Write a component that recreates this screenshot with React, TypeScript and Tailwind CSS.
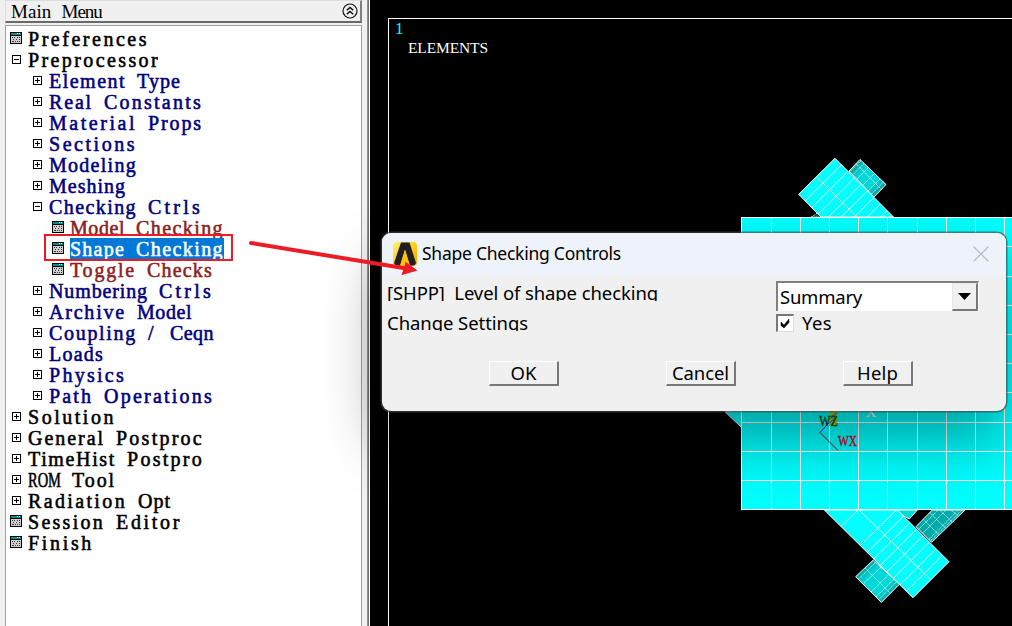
import React from "react";

const SERIF = '"Liberation Serif", serif';
const SANS = '"Noto Sans", "Open Sans", sans-serif';

let ctx: CanvasRenderingContext2D | null = null;
function measure(text: string, font: string) {
  if (!ctx) ctx = document.createElement("canvas").getContext("2d");
  if (!ctx) return 0;
  ctx.font = font;
  return ctx.measureText(text).width;
}

/* Text spread evenly over a fixed width; text that is much too wide is condensed instead. */
function Fit({ text, width, size, family }: { text: string; width: number; size: number; family: string }) {
  const natural = measure(text, `${size}px ${family}`);
  const spacing = (width - natural) / text.length;
  const condense = spacing < -1;
  return (
    <span
      className="inline-block shrink-0 origin-left whitespace-pre"
      style={{
        width,
        fontSize: size,
        fontFamily: family,
        letterSpacing: condense ? 0 : `${spacing}px`,
        transform: condense ? `scaleX(${width / natural})` : undefined,
      }}
    >
      {text}
    </span>
  );
}

/* Words laid on a fixed character pitch. */
function Pitched({ text, pitch, size }: { text: string; pitch: number; size: number }) {
  return (
    <span className="flex" style={{ gap: pitch }}>
      {text.split(" ").map((word, i) => (
        <Fit key={i} text={word} width={word.length * pitch} size={size} family={SERIF} />
      ))}
    </span>
  );
}

type Kind = "form" | "plus" | "minus";
type Item = { level: 0 | 1 | 2; kind: Kind; label: string; selected?: boolean };

const items: Item[] = [
  { level: 0, kind: "form", label: "Preferences" },
  { level: 0, kind: "minus", label: "Preprocessor" },
  { level: 1, kind: "plus", label: "Element Type" },
  { level: 1, kind: "plus", label: "Real Constants" },
  { level: 1, kind: "plus", label: "Material Props" },
  { level: 1, kind: "plus", label: "Sections" },
  { level: 1, kind: "plus", label: "Modeling" },
  { level: 1, kind: "plus", label: "Meshing" },
  { level: 1, kind: "minus", label: "Checking Ctrls" },
  { level: 2, kind: "form", label: "Model Checking" },
  { level: 2, kind: "form", label: "Shape Checking", selected: true },
  { level: 2, kind: "form", label: "Toggle Checks" },
  { level: 1, kind: "plus", label: "Numbering Ctrls" },
  { level: 1, kind: "plus", label: "Archive Model" },
  { level: 1, kind: "plus", label: "Coupling / Ceqn" },
  { level: 1, kind: "plus", label: "Loads" },
  { level: 1, kind: "plus", label: "Physics" },
  { level: 1, kind: "plus", label: "Path Operations" },
  { level: 0, kind: "plus", label: "Solution" },
  { level: 0, kind: "plus", label: "General Postproc" },
  { level: 0, kind: "plus", label: "TimeHist Postpro" },
  { level: 0, kind: "plus", label: "ROM Tool" },
  { level: 0, kind: "plus", label: "Radiation Opt" },
  { level: 0, kind: "form", label: "Session Editor" },
  { level: 0, kind: "form", label: "Finish" },
];

const indent = ["pl-[3px]", "pl-6", "pl-[45px]"];
const tone = ["text-black", "text-[#000080]", "text-[#8b2222]"];

function NodeIcon({ kind }: { kind: Kind }) {
  if (kind === "form") {
    return (
      <svg width="13" height="13" shapeRendering="crispEdges">
        <rect width="12" height="12" fill="#000" />
        <rect x="1" y="1" width="10" height="2" fill="#009090" />
        <rect x="7" y="1" width="1" height="1" fill="#fff" />
        <rect x="9" y="1" width="1" height="1" fill="#fff" />
        <rect x="1" y="4" width="10" height="7" fill="#cfcfcf" />
        <path d="M2 5.5h1m1 0h1m2 0h1m1 0h1M3 7.5h1m2 0h1m2 0h1M2 9.5h2m1 0h1m1 0h1m1 0h1" stroke="#333" />
      </svg>
    );
  }
  return (
    <svg width="9" height="9" shapeRendering="crispEdges">
      <rect x=".5" y=".5" width="8" height="8" fill="#fff" stroke="#000" />
      <path d={kind === "plus" ? "M2 4.5h5M4.5 2v5" : "M2 4.5h5"} stroke="#000" />
    </svg>
  );
}

function MainMenu() {
  return (
    <aside className="flex h-full w-[370px] shrink-0 bg-[#f0f0f0]">
      <div className="flex w-[362px] flex-col pl-[5px]">
        <header className="flex h-[23px] shrink-0 items-center justify-between border-t border-b-2 border-l border-r-2 border-t-[#dedede] border-b-[#696969] border-l-[#dedede] border-r-[#808080] pl-[5px] pr-[2px]">
          <span className="pt-[2px]">
            <Pitched text="Main Menu" pitch={10.1} size={19} />
          </span>
          <svg width="16" height="16" viewBox="0 0 16 16" fill="none" stroke="#111">
            <circle cx="8" cy="8" r="7" strokeWidth="1.2" />
            <path d="M4.8 7.3 8 4.4l3.2 2.9M4.8 11.3 8 8.4l3.2 2.9" strokeWidth="1.5" />
          </svg>
        </header>
        <ul className="mt-[2px] flex-1 border-t border-l border-r border-[#a0a0a0] bg-white pt-[2px]">
          {items.map((it) => (
            <li key={it.label} className={`flex h-[21px] items-center ${indent[it.level]} ${tone[it.level]}`}>
              <span className={`flex w-[19px] shrink-0 ${it.kind === "form" ? "pl-px" : "pl-[3px]"}`}>
                <NodeIcon kind={it.kind} />
              </span>
              <span
                className={`flex h-[21px] items-center pt-px leading-[21px] [-webkit-text-stroke:0.55px_currentColor] ${
                  it.selected ? "bg-[#0078d7] text-white" : ""
                }`}
              >
                <Pitched text={it.label} pitch={11} size={20} />
              </span>
            </li>
          ))}
        </ul>
      </div>
      <div className="ml-[5px] w-[2px] bg-gradient-to-r from-[#a0a0a0] to-[#606060]" />
      <div className="w-px bg-white" />
    </aside>
  );
}

const verticals = [771.5, 800.5, 829.5, 858.5, 887.5, 917.5, 946.5, 975.5, 1004.5];
const horizontals = [246.5, 276.5, 305.5, 334.5, 363.5, 392.5, 422.5, 451.5, 480.5];
const seq = (n: number) => Array.from({ length: n }, (_, i) => i);

function Model() {
  return (
    <svg className="block h-[626px] w-[642px]" viewBox="370 0 642 626">
      <defs>
        <linearGradient id="tube" x1="0" y1="0" x2="1" y2="1">
          <stop offset="0" stopColor="#006b6b" />
          <stop offset=".35" stopColor="#00d8d8" />
          <stop offset=".65" stopColor="#00d8d8" />
          <stop offset="1" stopColor="#006b6b" />
        </linearGradient>
        <clipPath id="upper"><path d="M835 158.3 798.7 194.3 821 217H893.5Z" /></clipPath>
        <clipPath id="lower"><path d="M343 330 609 593 717 485 562 330Z" /></clipPath>
      </defs>
      <path d="M1012 18.5H388.5V626" fill="none" stroke="#fff" shapeRendering="crispEdges" />
      <text x="395" y="34" fill="#0ff" fontSize="17" fontFamily="Liberation Serif, serif">1</text>
      <text x="408" y="53" fill="#fff" fontSize="15.5" textLength="80" fontFamily="Liberation Serif, serif">ELEMENTS</text>

      <g stroke="#fff" strokeWidth="1">
        <path d="M860 159.5 886 184.5 874 197 849 171Z" fill="url(#tube)" />
        <path d="M856 163.5 881.5 189.5M864 163.5 853 174.5M861 160.5 850 171.5M868 168 857 179M874.5 173.5 863 185M880 179 868 191M883.5 182 871.5 194" strokeWidth=".8" strokeDasharray="1.5 .7" />
        <path d="M811 217 819 212 822 217Z" fill="#055" strokeDasharray="1 1" />
        <path d="M835 158.3 798.7 194.3 821 217H893.5Z" fill="#0ff" />
        <g clipPath="url(#upper)" strokeWidth=".85">
          {seq(9).map((i) => (
            <path key={i} d={`M${841.5 + 6.5 * i} ${164.8 + 6.5 * i}l-38 38`} />
          ))}
          <path d="M816.5 176.5l42 42" />
        </g>
      </g>

      <g transform="translate(710 400) scale(.33333)" stroke="#fff" strokeWidth="3">
        <path d="M667 330 618 380 665 427 765 330Z" fill="#00aaaa" />
        <path d="M745 330 654 421M756 330 660 424M684 330 626 388M708 330 638 400M640 358 686 404M660 338 706 384M690 330 726 366M722 330 746 348" strokeWidth="2.2" strokeDasharray="4 2" />
        <path d="M548 330H622L598 357Z" fill="#00dada" />
        <path d="M490 480 437 530 514 607 568 553Z" fill="url(#tube)" />
        <path d="M466 505 542 581M445 538 498 486M462 550 515 500M483 576 536 524M498 591 552 537M506 599 560 545" strokeWidth="2.2" strokeDasharray="4 2" />
        <path d="M343 330 609 593 717 485 562 330Z" fill="#0ff" />
        <g clipPath="url(#lower)" strokeWidth="2.6">
          <path d="M445 328 664 541M393 380 446 328M450 438 561 328" />
          {seq(7).map((i) => (
            <path key={i} d={`M${470 + 19.7 * i} ${459 + 19.4 * i}l110 -110`} />
          ))}
        </g>
        <path d="M45 35 94 82V32Z" fill="#0ff" />
      </g>

      <g shapeRendering="crispEdges">
        <rect x="741.5" y="217.5" width="275" height="292" fill="#0ff" stroke="#fff" />
        <path d={verticals.map((x) => `M${x} 217V509`).join("") + horizontals.map((y) => `M741 ${y}H1012`).join("")} stroke="#fff" />
      </g>
      <path d="M820 432.5 831 420.5" stroke="#6010f0" />
      <path d="M820 432.5 838 450.5" stroke="#b00000" />
      <g fontFamily="Liberation Serif, serif" fontSize="15">
        <rect x="829" y="411" width="8" height="15" fill="#a4c800" opacity=".8" />
        <g fill="#065006" stroke="#065006" strokeWidth=".4">
          <text x="819" y="426" textLength="19" lengthAdjust="spacingAndGlyphs">WZ</text>
        </g>
        <path d="m831 417 6-4M830 423l6-7" stroke="#6040e0" />
        <g fill="#d00020" stroke="#d00020" strokeWidth=".4">
          <text x="838" y="446" textLength="19" lengthAdjust="spacingAndGlyphs">WX</text>
        </g>
        <text x="865.5" y="417" fill="#fff">X</text>
      </g>
    </svg>
  );
}

function PushButton({ label, width }: { label: string; width: number }) {
  return (
    <button className="flex h-[25px] w-[70px] items-center justify-center border-t border-l border-r-2 border-b-2 border-t-white border-l-white border-r-[#787878] border-b-[#787878] bg-[#f0f0f0]">
      <Fit text={label} width={width} size={18.5} family={SANS} />
    </button>
  );
}

function ShapeDialog() {
  return (
    <section className="absolute left-[382px] top-[233px] flex h-[178px] w-[624px] flex-col overflow-hidden rounded-[9px] bg-[#f0f0f0] text-black shadow-[0_0_0_1.5px_rgba(70,70,70,0.65),0_30px_60px_rgba(0,0,0,0.38)]">
      <header className="flex h-[43px] shrink-0 items-center bg-[#eef3f9] pl-[11px] pr-[17px] pb-[2px]">
        <svg width="24" height="24" viewBox="0 0 24 24" className="mr-[5px]">
          <defs>
            <linearGradient id="gold" x1="0" y1="0" x2="1" y2="1">
              <stop offset="0" stopColor="#fff27a" />
              <stop offset=".5" stopColor="#ffcf18" />
              <stop offset="1" stopColor="#f7a400" />
            </linearGradient>
          </defs>
          <rect width="24" height="24" rx="4" fill="url(#gold)" />
          <path d="M8 .5h8.5L23 21q-.5 2-3 2.5h-3L12 7.500 7 23.500H4Q1.500 23 1 21Z" fill="#231f20" />
          <path d="M12 8 16.800 24H7.200Z" fill="#ffc20e" />
        </svg>
        <Fit text="Shape Checking Controls" width={199} size={17.5} family={SANS} />
        <svg className="ml-auto" width="16" height="16" stroke="#b9bdc3" strokeWidth="1.3">
          <path d="m.7.7 14.6 14.6M15.3.7.7 15.3" />
        </svg>
      </header>
      <div className="flex pl-[5px] pt-[5px]">
        <div className="flex w-[389px] flex-col">
          <div className="h-5 overflow-hidden leading-[23px]">
            <Fit text="[SHPP]  Level of shape checking" width={271} size={18.5} family={SANS} />
          </div>
          <div className="mt-[10px] h-5 overflow-hidden leading-[23px]">
            <Fit text="Change Settings" width={141} size={18.5} family={SANS} />
          </div>
        </div>
        <div className="flex flex-col">
          <div className="flex h-[30px] w-[203px] border-t-2 border-l-2 border-r border-t-[#808080] border-l-[#808080] border-r-white bg-white">
            <div className="flex flex-1 items-center pl-[2px]">
              <Fit text="Summary" width={82} size={18.5} family={SANS} />
            </div>
            <div className="flex h-7 w-[26px] items-center justify-center border-t border-l border-r-2 border-b-2 border-t-[#e8e8e8] border-l-[#e8e8e8] border-r-[#787878] border-b-[#787878] bg-[#f0f0f0]">
              <svg width="13" height="7"><path d="M0 0h13L6.500 7Z" /></svg>
            </div>
          </div>
          <div className="mt-[3px] flex h-[18px] items-center">
            <span className="mr-2 flex h-[18px] w-[18px] items-center justify-center border-t-2 border-l-2 border-r border-b border-t-[#787878] border-l-[#787878] border-r-[#dedede] border-b-[#dedede] bg-white">
              <svg width="11" height="11"><path d="M1 4 4 7 9 1v3.500L4 10 1 7.500Z" stroke="#000" strokeWidth=".5" /></svg>
            </span>
            <Fit text="Yes" width={30} size={18.5} family={SANS} />
          </div>
        </div>
      </div>
      <div className="mt-[29px] flex gap-[107px] pl-[107px]">
        <PushButton label="OK" width={26} />
        <PushButton label="Cancel" width={57} />
        <PushButton label="Help" width={41} />
      </div>
    </section>
  );
}

export default function App() {
  return (
    <main className="relative flex h-[626px] w-[1012px] overflow-hidden bg-black">
      <MainMenu />
      <Model />
      <ShapeDialog />
      <div className="pointer-events-none absolute left-[44px] top-[234px] h-[27px] w-[189px] border-2 border-[#ed1c24]" />
      <svg className="pointer-events-none absolute left-[245px] top-[235px]" width="180" height="45" viewBox="245 235 180 45">
        <path d="M251 243 405 268.300" stroke="#ed1c24" strokeWidth="4" strokeLinecap="round" />
        <path d="M405.500 261.800 417.500 270.600 401.300 275.200 404 268Z" fill="#ed1c24" />
      </svg>
    </main>
  );
}
